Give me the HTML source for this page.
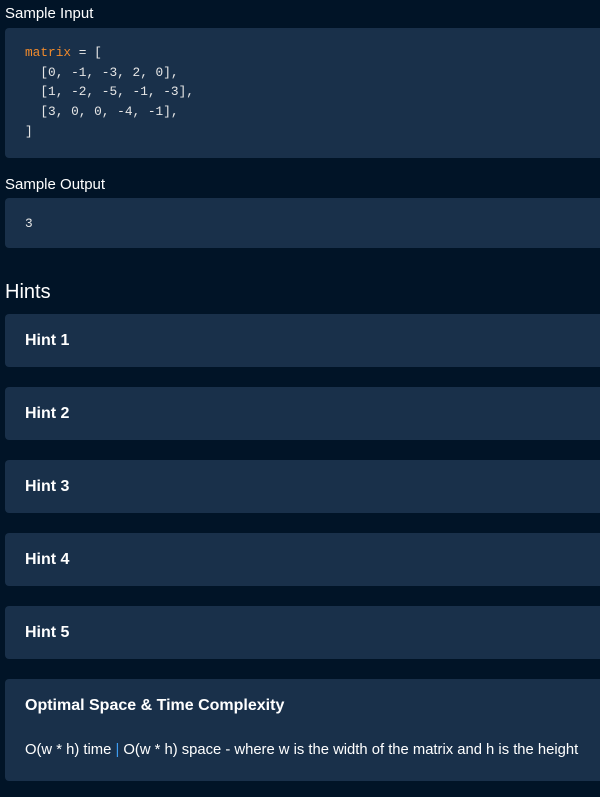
<!DOCTYPE html>
<html><head><style>
body{margin:0;background:#011427;width:600px;height:797px;overflow:hidden;font-family:"Liberation Sans",sans-serif;color:#fff;position:relative}
.a{position:absolute;left:5px}
.lab{font-size:15px;color:#fff}
.p{position:absolute;left:5px;width:610px;background:#19304a;border-radius:4px}
.code{font-family:"Liberation Mono",monospace;font-size:12.8px;line-height:19.7px;position:absolute;left:25px;white-space:pre;color:#e6e6e6}
.h{font-weight:bold;font-size:16px;position:absolute;left:25px}
</style></head><body>
<div class="a lab" style="top:5px">Sample Input</div>
<div class="p" style="top:28px;height:130px"></div>
<div class="code" style="top:43px"><span style="color:#f08a2c">matrix</span> = [
  [0, -1, -3, 2, 0],
  [1, -2, -5, -1, -3],
  [3, 0, 0, -4, -1],
]</div>
<div class="a lab" style="top:176px">Sample Output</div>
<div class="p" style="top:198px;height:50px"></div>
<div class="code" style="top:214px">3</div>
<div class="a" style="top:281px;font-size:20px">Hints</div>
<div class="p" style="top:314px;height:53px"></div><div class="h" style="top:332px">Hint 1</div>
<div class="p" style="top:387px;height:53px"></div><div class="h" style="top:405px">Hint 2</div>
<div class="p" style="top:460px;height:53px"></div><div class="h" style="top:478px">Hint 3</div>
<div class="p" style="top:533px;height:53px"></div><div class="h" style="top:551px">Hint 4</div>
<div class="p" style="top:606px;height:53px"></div><div class="h" style="top:624px">Hint 5</div>
<div class="p" style="top:679px;height:102px"></div>
<div class="h" style="top:697px">Optimal Space &amp; Time Complexity</div>
<div style="position:absolute;left:25px;top:742px;font-size:14.8px;white-space:nowrap">O(w * h) time <span style="color:#3d9cf0">|</span> O(w * h) space - where w is the width of the matrix and h is the height</div>
</body></html>
